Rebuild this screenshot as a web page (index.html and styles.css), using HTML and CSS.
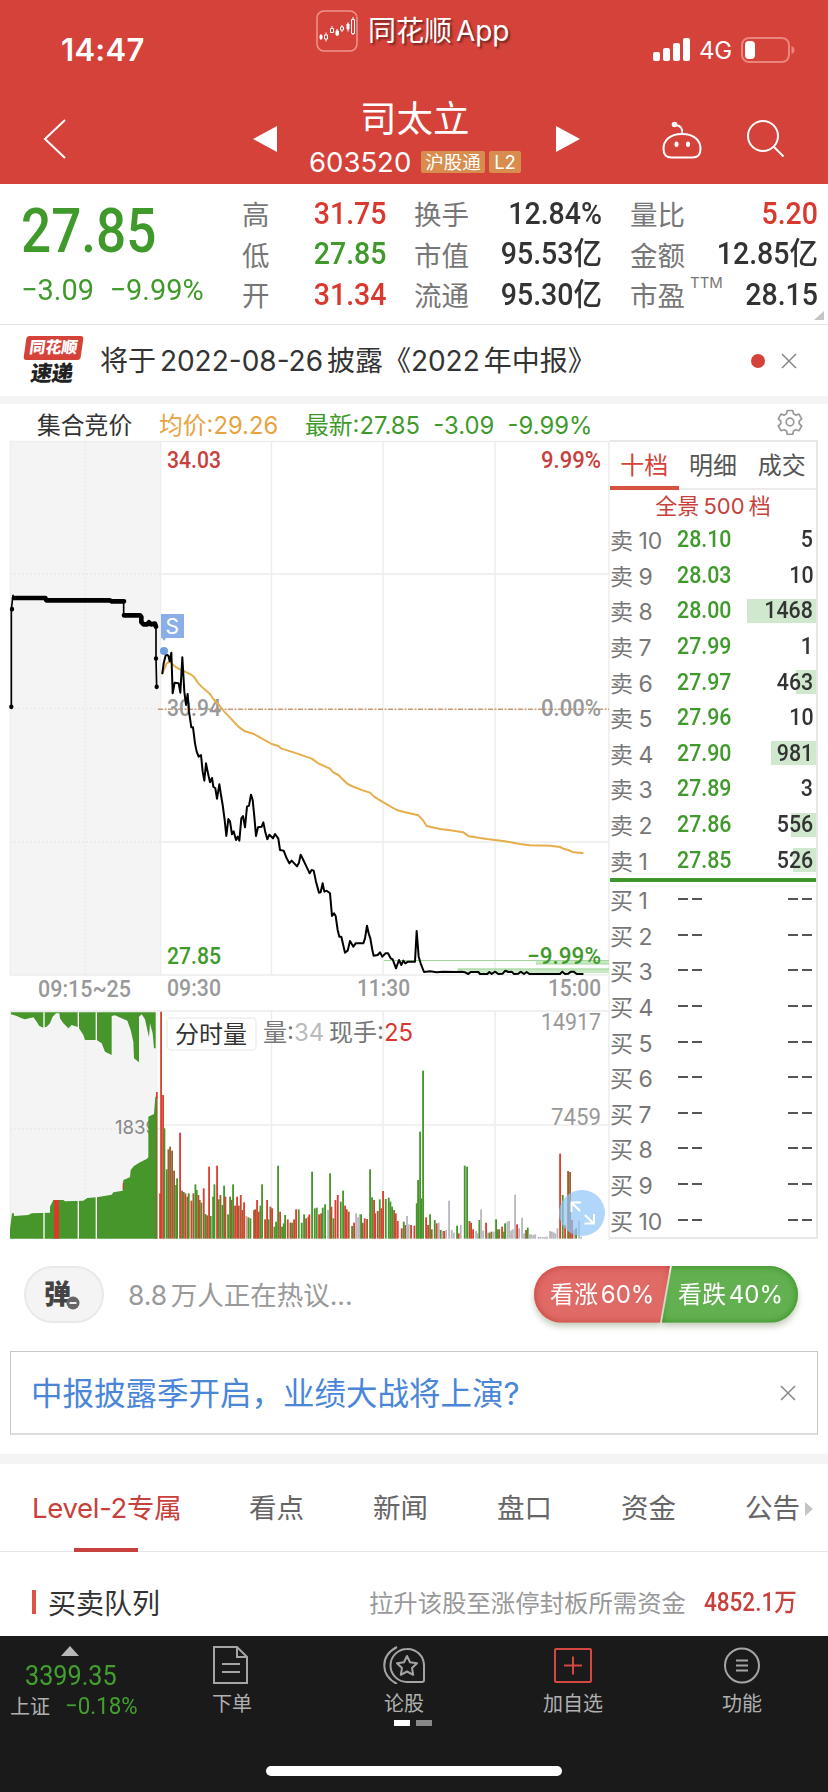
FILE: index.html
```html
<!DOCTYPE html>
<html lang="zh-CN">
<head>
    <meta charset="UTF-8">
    <meta name="viewport" content="width=device-width, initial-scale=1.0">
    <title>司太立 603520</title>
    <link rel="stylesheet" href="styles.css">
</head>
<body>
    <header class="header">
        <div class="status-bar">
            <span class="time">14:47</span>
            <div class="app-name">
                <svg width="42" height="42" viewBox="0 0 42 42" fill="none" stroke="#fff">
                    <rect x="1" y="1" width="40" height="40" rx="7" stroke="#f0958d" stroke-width="1.5"/>
                    <path d="M5 24v6M10 22.500v9M16 16v7M21 19v7M26 15v7M32 12.500v9M37 7v18" stroke-width="1"/>
                    <path d="M4 25.500h2v3h-2zM20 21h2.500v4h-2.500zM31 14h2v5h-2z" fill="#fff"/>
                    <path d="M8.500 25h3v4h-3zM14.500 18.500h3v4h-3zM24.500 17h3v3h-3zM35.500 9.500h3v14h-3z" fill="#d4423a"/>
                </svg>
                <span>同花顺 App</span>
            </div>
            <div class="signal">
                <svg width="38" height="24" viewBox="0 0 38 24" fill="#fff">
                    <rect x="0" y="14" width="7" height="9" rx="2"/>
                    <rect x="10" y="10" width="7" height="13" rx="2"/>
                    <rect x="20" y="5" width="7" height="18" rx="2"/>
                    <rect x="30" y="0" width="7" height="23" rx="2"/>
                </svg>
                <span class="network">4G</span>
                <svg width="54" height="26" viewBox="0 0 54 26">
                    <rect x="1" y="1" width="47" height="24" rx="7" fill="none" stroke="#e9857e" stroke-width="2"/>
                    <rect x="4" y="4" width="10" height="18" rx="4" fill="#fff"/>
                    <path d="M50.500 9q3 1 3 4t-3 4z" fill="#e9857e"/>
                </svg>
            </div>
        </div>
        <div class="nav-bar">
            <svg class="back" width="24" height="42" viewBox="0 0 24 42" fill="none" stroke="#fff" stroke-width="2">
                <path d="M22 2 2 21l20 19"/>
            </svg>
            <svg class="prev" width="24" height="26" viewBox="0 0 24 26"><path d="M24 0v26L0 13z" fill="#fff"/></svg>
            <div class="stock">
                <h1>司太立</h1>
                <div class="stock-code">
                    <span>603520</span>
                    <b class="tag">沪股通</b>
                    <b class="tag tag-l2">L2</b>
                </div>
            </div>
            <svg class="next" width="24" height="26" viewBox="0 0 24 26"><path d="M0 0v26l24-13z" fill="#fff"/></svg>
            <svg class="robot" width="42" height="40" viewBox="0 0 42 40" fill="none" stroke="#fff" stroke-width="2">
                <path d="M20 14C7 14 1.500 21 1.500 29c0 6 3 8.500 8 8.500h21c5 0 8-2.500 8-8.500 0-8-5.500-15-18.500-15z"/>
                <path d="M20 14c1-5-1-8-6-9"/>
                <circle cx="12.500" cy="4.500" r="1.800" fill="#fff"/>
                <path d="M14.500 23.500v1.500M26 23.500v1.500" stroke-width="4" stroke-linecap="round"/>
            </svg>
            <svg class="search" width="40" height="40" viewBox="0 0 40 40" fill="none" stroke="#fff" stroke-width="2">
                <circle cx="16" cy="16" r="15"/>
                <path d="M27 27l9.500 9.500"/>
            </svg>
        </div>
    </header>

    <section class="quote">
        <div class="quote-main">
            <div class="price">27.85</div>
            <div class="change"><span>−3.09</span><span>−9.99%</span></div>
        </div>
        <dl class="quote-col col-1">
            <dt>高</dt><dd class="red">31.75</dd>
            <dt>低</dt><dd class="green">27.85</dd>
            <dt>开</dt><dd class="red">31.34</dd>
        </dl>
        <dl class="quote-col col-2">
            <dt>换手</dt><dd>12.84%</dd>
            <dt>市值</dt><dd>95.53亿</dd>
            <dt>流通</dt><dd>95.30亿</dd>
        </dl>
        <dl class="quote-col col-3">
            <dt>量比</dt><dd class="red">5.20</dd>
            <dt>金额</dt><dd>12.85亿</dd>
            <dt>市盈<sup>TTM</sup></dt><dd>28.15</dd>
        </dl>
        <i class="corner"></i>
    </section>

    <section class="notice">
        <div class="notice-logo">
            <span class="logo-top">同花顺</span>
            <span class="logo-bottom">速递</span>
        </div>
        <p>将于 2022-08-26 披露《2022 年中报》</p>
        <i class="dot"></i>
        <svg width="16" height="16" viewBox="0 0 16 16" stroke="#888" stroke-width="1.500"><path d="M1 1l14 14M15 1 1 15"/></svg>
    </section>

    <div class="legend">
        <span class="legend-auction">集合竞价</span>
        <span class="legend-avg">均价:29.26</span>
        <span class="legend-last">最新:27.85&nbsp; -3.09&nbsp; -9.99%</span>
        <svg class="gear" width="26" height="26" viewBox="0 0 26 26" fill="none" stroke="#999" stroke-width="1.700" stroke-linejoin="round">
            <path d="M10.300 1.500h5.400l.8 3.300 2.200 1.300 3.300-1 2.700 4.700-2.500 2.300v2.600l2.500 2.300-2.700 4.700-3.300-1-2.200 1.300-.8 3.300h-5.400l-.8-3.300-2.200-1.300-3.300 1L1.300 17l2.500-2.300v-2.600L1.300 9.800 4 5.100l3.300 1 2.200-1.300z"/>
            <circle cx="13" cy="13" r="3.800"/>
        </svg>
    </div>

    <main class="market">
        <svg class="chart" width="610" height="800" viewBox="0 440 610 800">
            <!-- grid -->
            <rect x="10" y="441" width="150" height="534" fill="#f4f4f4"/>
            <rect x="10" y="1011" width="148" height="228" fill="#f4f4f4"/>
            <g stroke="#ededed" stroke-width="1.500">
                <path d="M10 441.500h600M160 574h450M160 842h450M10 975h600M10 1011h600M160 1125h450M10.500 441v534M160.500 441v534M271.500 441v534M383 441v534M495 441v534M609 441v799M271.500 1011v228M383 1011v228M495 1011v228M10.500 1011v228"/>
                <path d="M10 574h150M85 441v534M10 708.500h150M10 842h150M85 1011v228M10 1129h150" stroke="#e9e9e9" stroke-dasharray="2 2"/>
            </g>

            <!-- order walls near the limit price -->
            <g fill="#c9e9c5">
                <rect x="536" y="960" width="73" height="4"/>
                <rect x="457" y="968.500" width="152" height="4.500"/>
            </g>
            <path d="M384 960.500h225M458 969h151M536 964h73" stroke="#a3d59d" stroke-width="1.200"/>

            <!-- previous close -->
            <path d="M158 709.300h451" stroke="#c99a72" stroke-width="1.600" stroke-dasharray="5 1.500 2 1.500"/>

            <!-- call auction -->
            <g transform="translate(0 400) scale(.33333)" fill="none" stroke="#000" stroke-linejoin="round" stroke-linecap="round">
                <path d="M34 921V628l5-42M371 605v41M468 682v93l2 86" stroke-width="5"/>
                <path d="M42 594h94l3 7h190l5 3h38M372 646h48l4 5v15l6 7h12l5-6 6 6 12-2 3 9" stroke-width="14"/>
                <path d="M36 627v1M34 920v1M468 775v1M470 860v1" stroke-width="13"/>
            </g>

            <g class="axis">
                <text x="167" y="716" textLength="54" lengthAdjust="spacingAndGlyphs">30.94</text>
                <text x="541" y="716" textLength="60" lengthAdjust="spacingAndGlyphs">0.00%</text>
            </g>

            <!-- average and last price -->
            <g transform="translate(150 620) scale(.33333)" fill="none" stroke-linejoin="round" stroke-linecap="round">
                <polyline stroke="#e6ae4b" stroke-width="6" points="37,160 50,130 60,125 75,140 90,148 105,155 122,163 133,172 145,190 160,205 180,222 190,237 205,252 220,272 245,298 265,320 285,334 312,342 335,355 365,372 385,378 395,386 440,400 485,416 505,430 540,446 550,457 565,465 590,490 605,498 640,512 660,518 672,530 700,547 740,570 765,577 805,586 820,602 830,618 870,627 900,631 940,637 957,649 1010,657 1060,663 1110,672 1140,676 1200,677 1230,681 1240,686 1255,690 1270,697 1298,699"/>
                <polyline stroke="#000" stroke-width="6" points="37,160 41,130 48,103 55,107 59,124 64,98 68,220 74,188 86,190 91,218 97,112 103,215 108,255 113,222 117,275 124,322 129,322 135,370 140,395 146,410 153,405 158,455 163,482 168,430 174,460 180,487 186,474 190,500 196,505 201,536 208,493 213,525 218,555 224,600 229,648 235,597 240,604 246,643 251,634 258,660 263,650 268,662 274,595 279,588 285,622 291,560 297,557 303,524 308,540 313,590 318,648 324,622 335,620 340,607 346,637 352,658 358,644 369,655 375,642 385,656 390,690 401,692 410,715 418,730 425,722 441,739 447,728 452,704 460,720 468,737 479,760 485,750 491,752 498,785 507,818 512,817 518,790 523,815 530,812 540,820 546,888 552,880 557,888 563,930 568,950 574,950 585,998 593,992 600,963 610,980 617,970 640,970 645,955 651,917 656,940 661,955 667,990 671,1007 683,1005 690,997 697,1010 707,1000 714,1000 722,1015 728,1018 738,1045 747,1020 754,1035 760,1022 766,1030 774,1025 795,1025 800,933 806,1010 812,1030 822,1056 840,1054 860,1057 880,1055 920,1056 935,1055 945,1057 955,1062 962,1056 985,1056 990,1062 1012,1062 1018,1056 1025,1062 1035,1055 1045,1062 1058,1061 1066,1052 1075,1056 1085,1055 1092,1062 1105,1061 1112,1055 1122,1062 1130,1056 1138,1062 1230,1062 1237,1055 1245,1062 1255,1061 1263,1055 1271,1055 1280,1062 1298,1062"/>
            </g>

            <!-- sell point marker -->
            <circle cx="164" cy="651" r="4" fill="#6f9fe0"/>
            <path d="M161 614h23v24h-18l-2 3-2-3h-1z" fill="#8aafe8"/>
            <text x="165.500" y="634" class="marker">S</text>

            <g class="axis">
                <text x="167" y="468" textLength="54" lengthAdjust="spacingAndGlyphs" class="up">34.03</text>
                <text x="541" y="468" textLength="60" lengthAdjust="spacingAndGlyphs" class="up">9.99%</text>
                <text x="167" y="963.500" textLength="54" lengthAdjust="spacingAndGlyphs" class="down">27.85</text>
                <text x="527" y="963.500" textLength="74" lengthAdjust="spacingAndGlyphs" class="down">−9.99%</text>
                <text x="38" y="996.500" textLength="93" lengthAdjust="spacingAndGlyphs">09:15~25</text>
                <text x="167" y="995.500" textLength="54" lengthAdjust="spacingAndGlyphs">09:30</text>
                <text x="357" y="995.500" textLength="53" lengthAdjust="spacingAndGlyphs">11:30</text>
                <text x="548" y="995.500" textLength="53" lengthAdjust="spacingAndGlyphs">15:00</text>
            </g>

            <!-- call auction volume -->
            <text x="115" y="1133.500" class="auction-max" textLength="42" lengthAdjust="spacingAndGlyphs">1839</text>
            <g transform="translate(0 980) scale(.33333)">
                <path fill="#46962b" d="M30 776v-28l6-48h6v8l43-3 10-5 55-2v-18l10-20h30l5 4 55-2 12-8 28-2 45-8 5-7 28-5 2-32 20-8 2-22 10-12 18-11 20-10 5-5V410l17-8 4-52h6v426z"/>
                <path fill="#46962b" d="M33 97v6l17 5 15 7 10 3 25-6 8 10 10 16 12 5 10-3 10-10 8-20 10-10h10l2 15 10 15 15 15 10-10 20 7 15 23 5 15h35l15 10 10 25 20 10V108l10-2 20 9 17 7 10 28 8 35 2 50 15 12V110l8-7 10 15 7 32 5 22 3-42 8 30 4 45h5V97z"/>
                <path d="M132 97v48M235 97v48M289 97v86M132 698v78M235 662v114M289 650v126" stroke="#fff" stroke-width="4"/>
                <path d="M162 660h15v116h-15z" fill="#da3a28"/>
                <path d="M468 336h5v20h-5zM368 608h3v20h-3z" fill="#da3a28"/>
                <path d="M467 356h5v420h-5z" fill="#8a6a2f"/>
            </g>

            <g id="volume" transform="translate(0 980) scale(.33333)"></g>

            <g class="axis volume-axis">
                <text x="541" y="1029.500" textLength="60" lengthAdjust="spacingAndGlyphs">14917</text>
                <text x="551" y="1124.500" textLength="50" lengthAdjust="spacingAndGlyphs">7459</text>
            </g>
            <rect x="167" y="1018" width="89" height="32" rx="4" fill="#fff" stroke="#eee" stroke-width="1.500"/>
            <g class="volume-title">
                <text x="175" y="1043" class="dark">分时量</text>
                <text x="263" y="1041">量:<tspan fill="#bbb">34</tspan></text>
                <text x="329" y="1041">现手:<tspan fill="#d9382e">25</tspan></text>
            </g>

            <!-- full screen button -->
            <circle cx="582" cy="1213" r="23" fill="#8fc6f8" fill-opacity=".7"/>
            <path d="M580 1211l-8-8M571.500 1212v-9.500h9.500M585 1215l8 8M594 1214v9.500h-9.500" fill="none" stroke="#fff" stroke-width="2"/>
        </svg>

        <div class="book">
            <div class="book-tabs">
                <span class="active">十档</span><span>明细</span><span>成交</span>
            </div>
            <div class="book-link">全景 500 档</div>
            <div class="sells" id="sells"></div>
            <div class="buys" id="buys"></div>
        </div>
    </main>

    <section class="talk">
        <div class="danmu">
            <span>弹</span>
            <svg width="14" height="14" viewBox="0 0 14 14"><circle cx="7" cy="7" r="6.500" fill="#666"/><path d="M3.500 7h7" stroke="#eee" stroke-width="2"/></svg>
        </div>
        <p>8.8 万人正在热议...</p>
        <div class="vote">
            <span class="vote-up">看涨 60%</span>
            <span class="vote-down">看跌 40%</span>
        </div>
    </section>

    <section class="promo">
        <a>中报披露季开启，业绩大战将上演?</a>
        <svg width="16" height="16" viewBox="0 0 16 16" stroke="#888" stroke-width="1.500"><path d="M1 1l14 14M15 1 1 15"/></svg>
    </section>

    <nav class="tabs">
        <span class="active">Level-2专属</span>
        <span>看点</span>
        <span>新闻</span>
        <span>盘口</span>
        <span>资金</span>
        <span class="more">公告</span>
    </nav>

    <section class="queue">
        <h2>买卖队列</h2>
        <span class="queue-desc">拉升该股至涨停封板所需资金</span>
        <b>4852.1万</b>
    </section>

    <footer class="toolbar">
        <div class="index">
            <i class="arrow"></i>
            <strong>3399.35</strong>
            <p><span>上证</span><em>−0.18%</em></p>
        </div>
        <div class="tool">
            <svg width="38" height="38" viewBox="0 0 38 38" fill="none" stroke="#a5a5a5" stroke-width="2">
                <path d="M1 1h23l10 10v26H1zM24 1v10h10M9 18h18M9 26h18"/>
            </svg>
            <span>下单</span>
        </div>
        <div class="tool talk-tool">
            <svg width="42" height="38" viewBox="0 0 42 38" fill="none" stroke="#a5a5a5" stroke-width="2">
                <path d="M24 3a16.300 16.300 0 1 0 0 33h15q2 0 2-2V20A16.500 16.500 0 0 0 24 3z"/>
                <path d="M14 1C-3 10-3 29 14 38"/>
                <path d="M24 10l3 6.200 7 1-5 4.800 1.200 6.800-6.200-3.300-6.200 3.300L19 22l-5-4.800 7-1z" stroke-linejoin="round"/>
            </svg>
            <span>论股</span>
            <div class="pager"><i></i><i></i></div>
        </div>
        <div class="tool">
            <svg width="38" height="38" viewBox="0 0 38 38" fill="none" stroke="#d4483f" stroke-width="2">
                <rect x="1" y="3" width="36" height="33" rx="1"/>
                <path d="M10 19.500h18M19 10.500v18"/>
            </svg>
            <span>加自选</span>
        </div>
        <div class="tool">
            <svg width="36" height="38" viewBox="0 0 36 38" fill="none" stroke="#a5a5a5" stroke-width="2">
                <circle cx="18" cy="19.500" r="17"/>
                <path d="M12 14.500h12M12 19.500h12M12 24.500h12"/>
            </svg>
            <span>功能</span>
        </div>
        <i class="home-indicator"></i>
    </footer>

    <script src="script.js"></script>
</body>
</html>
```
FILE: styles.css
```css
* {
    box-sizing: border-box;
}

body {
    margin: 0;
    width: 828px;
    height: 1792px;
    overflow: hidden;
    display: flex;
    flex-direction: column;
    background: #fff;
    color: #333;
    font-family: Inter, "Noto Sans CJK SC", sans-serif;
    font-weight: 400;
}

svg {
    display: block;
    flex: none;
}

p, h1, h2, dl, dd {
    margin: 0;
    font-weight: 400;
}

i, em {
    font-style: normal;
}

/* header */
.header {
    height: 184px;
    background: #d4423a;
    color: #fff;
}

.status-bar {
    display: grid;
    grid-template-columns: 316px 1fr 175px;
    height: 100px;
}

.time {
    padding: 31px 0 0 61px;
    font-size: 31px;
    line-height: 38px;
    font-weight: 600;
    letter-spacing: .3px;
}

.app-name {
    display: flex;
    align-items: center;
    gap: 10px;
    height: 44px;
    margin-top: 9px;
    font-size: 28px;
    word-spacing: -4px;
    text-shadow: 2px 2px 2px rgba(0, 0, 0, .45);
}

.app-name span {
    margin-top: -4px;
}

.signal {
    display: flex;
    align-items: center;
    height: 26px;
    margin-top: 37px;
}

.network {
    width: 50px;
    padding-left: 8px;
    font-size: 24px;
    letter-spacing: -.3px;
}

.nav-bar {
    display: grid;
    grid-template-columns: 210px 56px 247px 106px 85px 1fr;
    grid-template-rows: 84px;
    padding-left: 43px;
}

.nav-bar > svg {
    margin-top: 18px;
}

.nav-bar > .prev,
.nav-bar > .next {
    margin-top: 26px;
}

.nav-bar > .robot,
.nav-bar > .search {
    margin-top: 20px;
}

.stock h1 {
    font-size: 36.500px;
    line-height: 40px;
    padding-left: 51px;
    margin-top: -1px;
}

.stock-code {
    display: flex;
    align-items: center;
    height: 26px;
    margin-top: 10px;
    gap: 4px;
    font-size: 27.500px;
}

.stock-code span {
    width: 108px;
    white-space: nowrap;
}

.tag {
    width: 64px;
    height: 22px;
    border-radius: 2px;
    background: #d88c4e;
    font-size: 18.5px;
    line-height: 22px;
    font-weight: 400;
    text-align: center;
}

.tag-l2 {
    width: 32px;
}

/* quote */
.quote {
    position: relative;
    display: flex;
    height: 141px;
    border-bottom: 1px solid #e4e4e4;
}

.quote-main {
    width: 242px;
    padding: 17px 0 0 21px;
    color: #3f9a2b;
    font-family: Roboto, sans-serif;
}

.price {
    width: 152px;
    font-size: 61px;
    line-height: 60px;
    font-weight: 500;
    transform: scaleX(.87);
    transform-origin: left;
}

.change {
    display: flex;
    gap: 16px;
    margin-top: 12px;
    width: 210px;
    font-size: 30px;
    line-height: 34px;
    white-space: nowrap;
    transform: scaleX(.965);
    transform-origin: left;
}

.quote-col {
    display: grid;
    grid-template-columns: auto 1fr;
    grid-template-rows: 40.500px 40.500px 40.500px;
    align-items: center;
    padding-top: 11px;
    height: 133px;
    line-height: 38px;
}

.col-1 {
    width: 144px;
    margin-right: 28px;
}

.col-2 {
    width: 188px;
    margin-right: 28px;
}

.col-3 {
    width: 188px;
}

.quote-col dt {
    position: relative;
    font-size: 27.5px;
    color: #777;
}

.quote-col sup {
    position: absolute;
    left: 60px;
    top: -4px;
    font-size: 15px;
    line-height: 20px;
}

.quote-col dd {
    text-align: right;
    font-family: Roboto, "Noto Sans CJK SC", sans-serif;
    font-size: 31px;
    font-weight: 500;
    transform: scaleX(.92);
    transform-origin: right;
    white-space: nowrap;
    margin-top: -3px;
}

.quote-col .red {
    color: #d9382e;
}

.quote-col .green {
    color: #3f9a2b;
}

.corner {
    position: absolute;
    right: 4px;
    bottom: 4px;
    border-left: 10px solid transparent;
    border-bottom: 9px solid #c4c4c4;
}

/* notice */
.notice {
    display: flex;
    align-items: center;
    height: 79px;
    padding: 0 31px 8px 24px;
    border-bottom: 8px solid #f4f4f4;
}

.notice-logo {
    width: 76px;
    padding-top: 8px;
}

.logo-top,
.logo-bottom {
    display: block;
    font-weight: 900;
    text-align: center;
    transform: skewX(-8deg);
}

.logo-top {
    width: 57px;
    height: 24px;
    margin-left: 1px;
    border-radius: 3px;
    background: #d4423a;
    color: #fff;
    font-size: 16px;
    line-height: 23px;
}

.logo-bottom {
    width: 56px;
    font-size: 21.500px;
    line-height: 26px;
    letter-spacing: -.5px;
    color: #222;
}

.notice p {
    flex: 1;
    margin-top: 4px;
    font-size: 28px;
    word-spacing: -4px;
    white-space: nowrap;
}

.dot {
    width: 14px;
    height: 14px;
    margin: 8px 16px 0 0;
    border-radius: 50%;
    background: #d4423a;
}

.notice > svg {
    margin-top: 8px;
}

/* legend */
.legend {
    display: flex;
    align-items: center;
    height: 36px;
    padding: 3px 25px 0 37px;
    font-size: 23.800px;
    white-space: nowrap;
}

.legend-auction {
    width: 122px;
}

.legend-avg {
    width: 146px;
    color: #e6a440;
}

.legend-last {
    flex: 1;
    color: #3f9a2b;
}

.gear {
    margin-top: -3px;
}

/* charts */
.market {
    display: flex;
    height: 800px;
}

.axis {
    font-family: Roboto, sans-serif;
    font-size: 24px;
    font-weight: 500;
    fill: #999;
}

.volume-axis {
    font-weight: 400;
}

.axis .up {
    fill: #c8403c;
}

.axis .down {
    fill: #3f9a2b;
}

.marker {
    font-size: 21px;
    fill: #fff;
}

.auction-max {
    font-size: 19px;
    fill: #888;
}

.volume-title {
    font-size: 24px;
    fill: #777;
}

.volume-title .dark {
    fill: #333;
}

/* order book */
.book {
    width: 208px;
    height: 799px;
    border: 1px solid #e8e8e8;
    border-width: 2px 2px 2px 0;
}

.book-tabs {
    display: flex;
    height: 48px;
    border-bottom: 2px solid #ececec;
    font-size: 24px;
    line-height: 48px;
    color: #555;
}

.book-tabs span {
    flex: 1;
    height: 48px;
    text-align: center;
    white-space: nowrap;
}

.book-tabs .active {
    color: #d4423a;
    border-bottom: 4px solid #d4523f;
}

.book-link {
    height: 31px;
    line-height: 33px;
    text-align: center;
    font-size: 22px;
    word-spacing: -2px;
    color: #c8403c;
}

.sells {
    height: 361px;
    padding-top: 1px;
    border-bottom: 4px solid #3f962b;
}

.level {
    display: grid;
    grid-template-columns: 67px 60px 1fr;
    align-items: center;
    height: 35.650px;
    line-height: 35px;
    font-size: 23px;
    word-spacing: -1px;
    color: #777;
    white-space: nowrap;
}

.level > span:first-child {
    margin-top: 2px;
}

.level .level-price,
.level .level-size {
    font-family: Roboto, sans-serif;
    font-size: 24px;
    font-weight: 500;
    color: #3f9a2b;
    margin-top: -2px;
}

.level .level-price {
    transform: scaleX(.89);
    transform-origin: left;
}

.level-size {
    display: grid;
    justify-items: end;
    align-items: center;
}

.level-size span,
.level-size i {
    grid-area: 1 / 1;
}

.level-size i {
    height: 24px;
    background: #d0e9ce;
}

.level-size span {
    padding-right: 3px;
    color: #333;
    transform: scaleX(.89);
    transform-origin: right;
}

.dashes {
    width: 24px;
    height: 2px;
    background: linear-gradient(90deg, #555 10px, transparent 10px, transparent 14px, #555 14px);
}

.level .dashes {
    margin: -3px 0 0 1px;
}

.level .dashes + .dashes {
    justify-self: end;
    margin-right: 4px;
}

/* discussion */
.talk {
    display: flex;
    align-items: center;
    height: 111px;
    padding: 0 30px 3px 24px;
}

.danmu {
    display: flex;
    align-items: center;
    width: 80px;
    height: 57px;
    padding-left: 18px;
    border: 2px solid #e9e9e9;
    border-radius: 29px;
    background: #f4f4f4;
    font-size: 27px;
    font-weight: 800;
    color: #444;
}

.danmu span {
    margin-top: -4px;
}

.danmu svg {
    margin: 17px 0 0 -5px;
}

.talk p {
    flex: 1;
    padding-left: 24px;
    margin-top: -2px;
    font-size: 26.500px;
    word-spacing: -4px;
    color: #999;
}

.vote {
    display: flex;
    width: 264px;
    height: 57px;
    font-size: 24px;
    line-height: 57px;
    word-spacing: -4px;
    color: #fff;
    filter: drop-shadow(0 4px 3px rgba(90, 110, 60, .35));
}

.vote span {
    white-space: nowrap;
}

.vote-up {
    width: 136px;
    padding-left: 16px;
    border-radius: 29px 0 0 29px;
    background: #e06a65;
    clip-path: polygon(0 0, 100% 0, 126px 100%, 0 100%);
    box-shadow: inset 0 0 7px #c33d38;
}

.vote-down {
    width: 136px;
    margin-left: -8px;
    padding-left: 16px;
    border-radius: 0 29px 29px 0;
    background: #62b050;
    clip-path: polygon(10px 0, 100% 0, 100% 100%, 0 100%);
    box-shadow: inset 0 0 7px #328a20;
}

/* promo */
.promo {
    display: flex;
    align-items: center;
    justify-content: space-between;
    height: 84px;
    margin: 0 10px 19px;
    padding: 0 21px 0 20px;
    border: 1px solid #c8c8c8;
    border-bottom: 2px solid #ddd;
    font-size: 31.500px;
    color: #4a86d8;
}

.promo a {
    margin-top: -4px;
}

/* tabs */
.tabs {
    display: grid;
    grid-template-columns: 216px 124px 124px 124px 124px 1fr;
    height: 98px;
    padding-left: 33px;
    border-top: 10px solid #f4f4f4;
    border-bottom: 1px solid #e6e6e6;
    font-size: 27.500px;
    line-height: 89px;
    color: #666;
    white-space: nowrap;
}

.tabs .active {
    width: 150px;
    margin-left: -1px;
    color: #c8403c;
    letter-spacing: -.3px;
}

.tabs .active::after {
    content: "";
    display: block;
    width: 64px;
    height: 4px;
    margin: -5px 0 0 42px;
    background: #c8403c;
}

.more {
    display: flex;
    align-items: center;
    gap: 5px;
}

.more::after {
    content: "";
    border: 7px solid transparent;
    border-left: 8px solid #c4c4c4;
    border-right: 0;
}

/* order queue */
.queue {
    display: flex;
    align-items: center;
    height: 84px;
    padding: 15px 33px 0 32px;
}

.queue h2 {
    flex: 1;
    display: flex;
    align-items: center;
    gap: 12px;
    font-size: 28px;
}

.queue h2::before {
    content: "";
    width: 4px;
    height: 24px;
    background: #dd5242;
}

.queue-desc {
    font-size: 24.400px;
    color: #999;
}

.queue b {
    width: 91px;
    margin: -3px 0 0 18px;
    font: 500 25px Roboto, "Noto Sans CJK SC", sans-serif;
    white-space: nowrap;
    color: #c8403c;
    transform: scaleX(.9);
    transform-origin: left;
}

/* toolbar */
.toolbar {
    display: grid;
    grid-template-columns: 146px 172px 172px 166px 1fr;
    grid-template-rows: 130px 10px;
    height: 156px;
    background: #1a1a1a;
    color: #b0b0b0;
    font-size: 20px;
}

.index .arrow {
    display: block;
    width: 18px;
    margin: 10px 0 0 61px;
    border: 9px solid transparent;
    border-top: 0;
    border-bottom: 10px solid #b8b8b8;
}

.index strong {
    display: block;
    width: 110px;
    margin: 4px 0 0 25px;
    font: 400 28px/32px Roboto, sans-serif;
    color: #43a02e;
    transform: scaleX(.9);
    transform-origin: left;
}

.index p {
    display: flex;
    gap: 15px;
    padding: 1px 0 0 10px;
    line-height: 28px;
}

.index em {
    font-family: Roboto, sans-serif;
    font-size: 24px;
    line-height: 26px;
    color: #43a02e;
    transform: scaleX(.93);
    transform-origin: left;
}

.tool {
    display: flex;
    flex-direction: column;
    align-items: center;
    padding-top: 10px;
}

.tool > span {
    margin-top: 6px;
    line-height: 28px;
}

.pager {
    display: flex;
    gap: 6px;
    margin-top: 2px;
    padding-left: 18px;
}

.pager i {
    width: 16px;
    height: 6px;
    background: #fff;
}

.pager i + i {
    background: #888;
}

.home-indicator {
    grid-column: 1 / -1;
    width: 296px;
    margin-left: 266px;
    border-radius: 5px;
    background: #fff;
}
```
FILE: script.js
```javascript
const sells = [
    ["10", "28.10", 5, 0],
    ["9", "28.03", 10, 0],
    ["8", "28.00", 1468, 69],
    ["7", "27.99", 1, 0],
    ["6", "27.97", 463, 20],
    ["5", "27.96", 10, 0],
    ["4", "27.90", 981, 45],
    ["3", "27.89", 3, 0],
    ["2", "27.86", 556, 25],
    ["1", "27.85", 526, 23]
];

document.getElementById("sells").innerHTML = sells.map(([level, price, size, width]) => `
    <div class="level">
        <span>卖 ${level}</span>
        <span class="level-price">${price}</span>
        <div class="level-size"><i style="width:${width}px"></i><span>${size}</span></div>
    </div>`).join("");

let buys = "";
for (let i = 1; i <= 10; i++) {
    buys += `<div class="level"><span>买 ${i}</span><i class="dashes"></i><i class="dashes"></i></div>`;
}
document.getElementById("buys").innerHTML = buys;

// x position, direction (r up, g down, b mixed, s flat), top of the bar
const volume = `
480r640 483r95 489r345 493g445 500g568 505b508 510b500 516b512 522b572 528g615 531g595 540r458 546b632 551g636 556r640 562b650 566g640
574r662 580b640 586g613 590g630 595r645 599b660 604g668 611r625 616g702 621b706 627r560 632g708 639g650 643g613 651r557 656g658 661b645 667g675 672g617 676r650
684g703 690g650 694b660 699g613 705r677 711r650 716b677 722r645 727b690 732r667 739p708 745g712 751g715
762r690 766b688 771r660 776r695 781g677 786g613 795r718 801r660 805g718 811b680 816r685 823g740 828g725 834g557 840r695 846g740 851g730 855g705
863r718 871b728 876g728 882r718 888r688 896g688 905g728 912g703 918b715 925r710 928r703 936g575 944g685 950g683 957r703 963b700 968g683 975g673
984s690 990g580 994r680 1000g715 1006r660 1013r645 1022g665 1029g632 1035r677 1040r688 1046b695 1056g738 1062r728 1068s700 1074s712 1079s703 1083g703 1088b728
1094r715 1101b717 1110g568 1116g652 1122r660 1125r700 1133r693 1139g658 1144r685 1149r633 1157g657 1166g653 1171g665 1176g680 1182b690 1187r700 1193r723
1205r745 1211g725 1216b735 1221s708 1226s733 1233r735 1243r737 1250g670 1254g600 1260g455 1264g655 1269g272
1278r712 1284r735 1290g703 1295b748 1304g720 1310r730 1316s728 1322g750 1327s753 1332r753 1338s750 1347s662 1355s750 1361s758 1371g737 1376r760 1382s735
1394g557 1401g560 1408b723 1413r728 1419r748 1428s753 1433s760 1438g720 1443s688 1449s752 1458r728 1463s758 1468g758 1474b755 1481s755 1488g718 1492g748 1497b748 1506r740 1512g755 1515g730 1522s725 1527s723
1533s752 1538s748 1545s644 1551r733 1557s745 1566s713 1572s760 1578b750 1583g743 1588s763 1593s763 1599s765 1605s763 1615s771 1621s771 1628s771 1635s771 1641s770 1650s753 1655s755 1660s757 1665s760 1672s745
1680r521 1688g645 1695r735 1704b573 1710b576 1716r720 1722s750 1728g745 1737s722 1743s770`;

const colors = {
    r: "#d9402f",
    g: "#46962b",
    b: "#9a6030",
    s: "#b9b9bd",
    p: "#e59a9a"
};
const BASELINE = 776;

document.getElementById("volume").innerHTML = volume.trim().split(/\s+/).map(item => {
    const [, x, dir, top] = item.match(/(\d+)(\w)(\d+)/);
    return `<rect x="${x - 2.5}" y="${top}" width="5.5" height="${BASELINE - top}" fill="${colors[dir]}"/>`;
}).join("");
```
